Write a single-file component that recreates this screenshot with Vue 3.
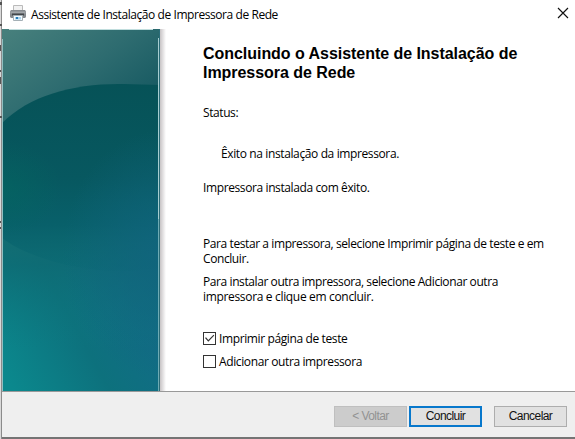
<script setup>
import { ref } from 'vue'

const printTest = ref(true)
const addAnother = ref(false)
</script>

<template>
  <div class="screen">
    <svg class="backdrop" width="2" height="439" viewBox="0 0 2 439" aria-hidden="true">
      <rect width="2" height="439" fill="#d9d9d9" />
      <rect x="1" width="1" height="439" fill="#8b8b8b" />
      <path d="M0 2h2v3H0zM0 24h2v2H0zM0 45h1v6H0zM0 70h1v2H0zM0 77h1v7H0zM0 116h2v2H0zM0 221h1v2H0zM0 227h1v2H0z" fill="#555" />
    </svg>
    <div class="window">
      <header class="titlebar">
        <svg class="printer" width="18" height="18" viewBox="0 0 18 18" aria-hidden="true">
          <path d="M4.500 7V1.500h9V7" fill="#f1f1f1" stroke="#bababa" />
          <path d="M2 6h14l1 1.500V13l-1 1H2l-1-1V7.500z" fill="#858a8e" />
          <path d="M1.500 7.500h15v2h-15z" fill="#a2a7aa" />
          <path d="M3 9.500h12v2H3z" fill="#42464a" />
          <path d="M4.500 11.500h9v5h-9z" fill="#f5fbff" stroke="#a5b0b6" />
          <path d="M6 13h6v2.500H6z" fill="#a9d3ec" />
          <path d="M7 13h2v2H7z" fill="#287bb5" />
        </svg>
        <span class="caption">Assistente de Instalação de Impressora de Rede</span>
        <svg class="close" width="12" height="12" viewBox="0 0 12 12" aria-label="Fechar">
          <path d="M1 1l10 10M11 1L1 11" stroke="#111" stroke-width="1.15" />
        </svg>
      </header>

      <main class="body">
        <svg class="banner" width="166" height="362" viewBox="0 0 166 362" aria-hidden="true">
          <defs>
            <linearGradient id="base" gradientUnits="userSpaceOnUse" x1="0" y1="340" x2="150" y2="260">
              <stop offset="0" stop-color="#0b888d" />
              <stop offset=".5" stop-color="#0d717d" />
              <stop offset="1" stop-color="#136b88" />
            </linearGradient>
            <linearGradient id="lift" gradientUnits="userSpaceOnUse" x1="0" y1="180" x2="0" y2="320">
              <stop offset="0" stop-color="#1b6c6d" />
              <stop offset=".4" stop-color="#0e6a72" stop-opacity=".75" />
              <stop offset="1" stop-color="#0b7b80" stop-opacity="0" />
            </linearGradient>
            <linearGradient id="top" gradientUnits="userSpaceOnUse" x1="10" y1="0" x2="90" y2="110">
              <stop offset="0" stop-color="#467f7c" />
              <stop offset=".55" stop-color="#2e6c70" />
              <stop offset="1" stop-color="#175a62" />
            </linearGradient>
            <linearGradient id="oval" x1="0" y1="0" x2="0" y2="1">
              <stop offset="0" stop-color="#065257" />
              <stop offset=".5" stop-color="#075860" />
              <stop offset=".75" stop-color="#08606a" />
              <stop offset="1" stop-color="#096a74" stop-opacity=".35" />
            </linearGradient>
            <radialGradient id="glow">
              <stop offset="0" stop-color="#036761" stop-opacity=".6" />
              <stop offset="1" stop-color="#036761" stop-opacity="0" />
            </radialGradient>
            <radialGradient id="blue">
              <stop offset="0" stop-color="#11647e" stop-opacity=".9" />
              <stop offset="1" stop-color="#11647e" stop-opacity="0" />
            </radialGradient>
            <linearGradient id="shade">
              <stop offset="0" stop-color="#c7c3c5" />
              <stop offset="1" stop-color="#fff" />
            </linearGradient>
            <clipPath id="art"><rect width="158" height="362" /></clipPath>
          </defs>
          <g clip-path="url(#art)">
            <rect width="158" height="362" fill="url(#base)" />
            <rect y="100" width="158" height="262" fill="url(#lift)" />
            <path d="M0 0H158V100H0z" fill="url(#top)" />
            <path d="M0 94C28 66 73 54 122 55L158 56V238C110 250 34 235 0 209z" fill="url(#oval)" />
            <ellipse cx="0" cy="160" rx="60" ry="48" fill="url(#glow)" />
            <ellipse cx="165" cy="225" rx="105" ry="125" fill="url(#blue)" />
          </g>
          <path d="M.5 10V362" stroke="#91bfc0" />
          <path d="M156.500 9V362" stroke="#6dabb4" />
          <path d="M156.500 9V190" stroke="#a5cdd0" />
          <path d="M157.500 0V362" stroke="#2b6c78" />
          <path d="M7 .5H151" stroke="#c0dddd" />
          <rect x="158" width="6" height="362" fill="url(#shade)" />
        </svg>

        <section class="content">
          <h1>Concluindo o Assistente de Instalação de<br />Impressora de Rede</h1>
          <p class="status">Status:</p>
          <p class="result">Êxito na instalação da impressora.</p>
          <p class="installed">Impressora instalada com êxito.</p>
          <p class="test">Para testar a impressora, selecione Imprimir página de teste e em<br />Concluir.</p>
          <p class="another">Para instalar outra impressora, selecione Adicionar outra<br /><span class="finish-line">impressora e clique em concluir.</span></p>
          <label class="option">
            <input v-model="printTest" type="checkbox" />
            <span>Imprimir página de teste</span>
          </label>
          <label class="option">
            <input v-model="addAnother" type="checkbox" />
            <span>Adicionar outra impressora</span>
          </label>
        </section>
      </main>

      <footer class="footer">
        <button class="back" disabled>&lt; Voltar</button>
        <button class="primary">Concluir</button>
        <button class="cancel">Cancelar</button>
      </footer>
    </div>
  </div>
</template>

<style>
body {
  margin: 0;
  overflow: hidden;
}
</style>

<style scoped>
.screen {
  display: flex;
  width: 575px;
  height: 439px;
  background: #fff;
  font-family: "Open Sans", "Noto Sans", sans-serif;
  font-size: 12px;
  color: #000;
}
.backdrop {
  flex: none;
}
.window {
  box-sizing: border-box;
  width: 573px;
  height: 439px;
  display: flex;
  flex-direction: column;
  border-bottom: 2px solid #747474;
}
.titlebar {
  display: flex;
  align-items: center;
  height: 29px;
  flex: none;
}
.printer {
  margin: 0 4px 3px 7px;
}
.caption {
  height: 20px;
  line-height: 20px;
  letter-spacing: -.43px;
  white-space: nowrap;
}
.close {
  margin: 0 6px 3px auto;
}
.body {
  display: flex;
  height: 362px;
}
.banner {
  flex: none;
}
.content {
  padding: 15px 0 0 35px;
  white-space: nowrap;
}
h1 {
  margin: 0;
  font: bold 16px/19px "Liberation Sans", Arial, sans-serif;
  letter-spacing: -.04px;
}
p {
  margin: 0;
  line-height: 15px;
  letter-spacing: -.41px;
}
.status {
  margin-top: 23px;
}
.result {
  margin: 26px 0 0 18px;
  letter-spacing: -.38px;
}
.installed {
  margin-top: 19px;
  letter-spacing: -.39px;
}
.test {
  margin-top: 41px;
}
.another {
  margin-top: 8px;
}
.finish-line {
  letter-spacing: -.33px;
}
.option {
  display: flex;
  align-items: center;
  height: 23px;
  gap: 3px;
  letter-spacing: -.38px;
}
.another + .option {
  margin-top: 23px;
}
input {
  appearance: none;
  box-sizing: border-box;
  width: 13px;
  height: 13px;
  margin: 0;
  border: 1px solid #333;
  background: #fff;
}
input:checked::before {
  content: "";
  display: block;
  width: 11px;
  height: 11px;
  background: #333;
  clip-path: polygon(1px 5px, 2px 4.300px, 4.300px 7px, 9.500px 1.700px, 10.300px 2.500px, 4.300px 8.700px);
}
.footer {
  box-sizing: border-box;
  display: flex;
  justify-content: flex-end;
  height: 46px;
  padding: 14px 8px 0 0;
  border-top: 1px solid #999;
  background: #efefef;
}
button {
  box-sizing: border-box;
  width: 73px;
  height: 21px;
  padding: 0;
  border: 1px solid #adadad;
  background: #e1e1e1;
  font: 12px/17px "Liberation Sans", Arial, sans-serif;
  letter-spacing: -.55px;
  color: #111;
}
.back {
  border-color: #bfbfbf;
  background: #ccc;
  color: #929292;
}
.primary {
  margin-left: 2px;
  border: 2px solid #0878cc;
}
.cancel {
  margin-left: 12px;
}
</style>
